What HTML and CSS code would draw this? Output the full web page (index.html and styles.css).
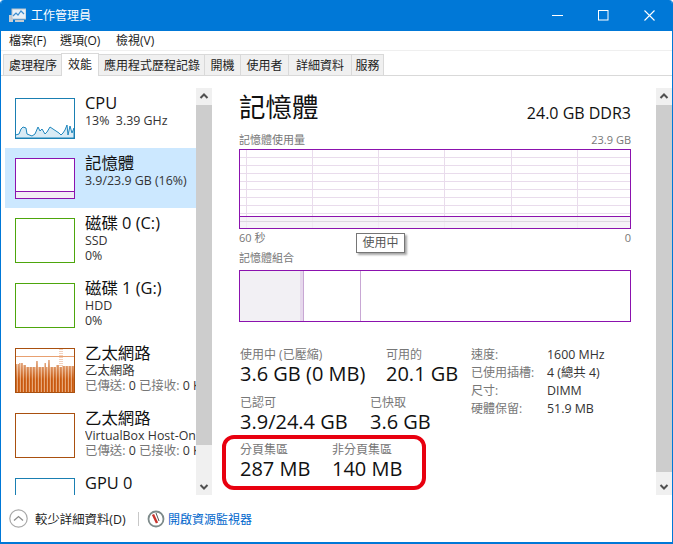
FILE: index.html
```html
<!DOCTYPE html>
<html lang="zh-Hant">
<head>
<meta charset="utf-8">
<title>工作管理員</title>
<link rel="stylesheet" href="styles.css">
</head>
<body>
<div class="window">
  <header class="titlebar">
    <svg class="app-icon" width="17" height="16" viewBox="0 0 17 16">
      <rect x="0" y="7" width="4" height="7" fill="#c9ced3"/>
      <rect x="3" y="1" width="14" height="10" fill="#e8f1f8" stroke="#b9c4cc"/>
      <polyline points="4,8 7,5 9,7 12,3 15,6" fill="none" stroke="#3f8fd0" stroke-width="1.2"/>
      <rect x="6" y="12" width="9" height="2" fill="#c4ccd2"/>
    </svg>
    <span class="title">工作管理員</span>
    <div class="controls">
      <svg width="11" height="11" viewBox="0 0 11 11"><path d="M0 5.5H11" stroke="#fff"/></svg>
      <svg width="11" height="11" viewBox="0 0 11 11"><rect x=".5" y=".5" width="9.5" height="9.5" fill="none" stroke="#fff"/></svg>
      <svg width="11" height="11" viewBox="0 0 11 11"><path d="M.5 .5L10.5 10.5M10.5 .5L.5 10.5" stroke="#fff" stroke-width="1.1"/></svg>
    </div>
  </header>

  <nav class="menu"><span>檔案(F)</span><span>選項(O)</span><span>檢視(V)</span></nav>

  <div class="tabs">
    <span class="tab t1">處理程序</span>
    <span class="tab active t2">效能</span>
    <span class="tab t3">應用程式歷程記錄</span>
    <span class="tab t4">開機</span>
    <span class="tab t5">使用者</span>
    <span class="tab t6">詳細資料</span>
    <span class="tab t7">服務</span>
  </div>

  <main class="main">
    <aside class="sidebar">
      <div class="list">
        <div class="item h60">
          <svg class="graph" width="60" height="41" viewBox="0 0 60 41">
            <path d="M.5 40V37L4 36L6 31L8 29L11 30L12 36L17 38L20 36L23 29L25 33L27 31L30 36L32 34L35 29L38 31L41 33L44 35L46 37L48 35L50 32L52 27L53 37L55 28L57 35L59 30V40Z" fill="#d9ebf5" stroke="#1f86bd"/>
            <rect x=".5" y=".5" width="59" height="40" fill="none" stroke="#1a7fb2"/>
          </svg>
          <div class="info"><div class="name">CPU</div><div class="sub">13%&nbsp; 3.39 GHz</div></div>
        </div>
        <div class="item h60 selected">
          <svg class="graph" width="60" height="41" viewBox="0 0 60 41">
            <rect x=".5" y=".5" width="59" height="40" fill="#fff"/>
            <rect x=".5" y="33.5" width="59" height="7" fill="#f2ecf4" stroke="#8b12ae"/>
            <rect x=".5" y=".5" width="59" height="40" fill="none" stroke="#8b12ae"/>
          </svg>
          <div class="info"><div class="name">記憶體</div><div class="sub">3.9/23.9 GB (16%)</div></div>
        </div>
        <div class="item h65">
          <span class="graph box green"></span>
          <div class="info"><div class="name">磁碟 0 (C:)</div><div class="sub">SSD</div><div class="sub">0%</div></div>
        </div>
        <div class="item h65">
          <span class="graph box green"></span>
          <div class="info"><div class="name">磁碟 1 (G:)</div><div class="sub">HDD</div><div class="sub">0%</div></div>
        </div>
        <div class="item h65">
          <svg class="graph" width="60" height="45" viewBox="0 0 60 45">
            <defs>
              <pattern id="stripes" width="3" height="45" patternUnits="userSpaceOnUse">
                <rect width="3" height="45" fill="#e8a878"/>
                <rect width="1.8" height="45" fill="#c9590f"/>
              </pattern>
              <linearGradient id="fade" x1="0" y1="0" x2="0" y2="1">
                <stop offset="0" stop-color="#fff" stop-opacity=".55"/>
                <stop offset=".6" stop-color="#fff" stop-opacity="0"/>
              </linearGradient>
            </defs>
            <rect width="60" height="45" fill="#fff"/>
            <path d="M1 44V16H4V15H8V17H11V19H21V13H23V19H29V15H31V19H33V12H35V19H41V17H44V19H47V18H60V44Z" fill="url(#stripes)"/>
            <path d="M1 44V16H4V15H8V17H11V19H21V13H23V19H29V15H31V19H33V12H35V19H41V17H44V19H47V18H60V44Z" fill="url(#fade)"/>
            <path d="M45 1V19M47 1V19" stroke="#e5a27a" stroke-dasharray="1 1"/>
            <path d="M1 8.5H59" stroke="#e8a070"/>
            <rect x=".5" y=".5" width="59" height="44" fill="none" stroke="#a9500f"/>
          </svg>
          <div class="info"><div class="name">乙太網路</div><div class="sub">乙太網路</div><div class="sub net">已傳送: <b>0</b> 已接收: <b>0 Kbps</b></div></div>
        </div>
        <div class="item h65">
          <span class="graph box brown"></span>
          <div class="info"><div class="name">乙太網路</div><div class="sub">VirtualBox Host-Only</div><div class="sub net">已傳送: <b>0</b> 已接收: <b>0 Kbps</b></div></div>
        </div>
        <div class="item last">
          <span class="graph box blue"></span>
          <div class="info"><div class="name">GPU 0</div></div>
        </div>
      </div>
      <div class="scrollbar narrow">
        <svg class="arrow" width="16" height="17" viewBox="0 0 16 17"><path d="M4.5 10L8 6.5L11.5 10" fill="none" stroke="#505050" stroke-width="2"/></svg>
        <div class="thumb side-thumb"></div>
        <div class="track"></div>
        <svg class="arrow" width="16" height="17" viewBox="0 0 16 17"><path d="M4.5 7L8 10.5L11.5 7" fill="none" stroke="#505050" stroke-width="2"/></svg>
      </div>
    </aside>

    <section class="detail">
      <div class="head"><h1>記憶體</h1><div class="spec">24.0 GB DDR3</div></div>
      <div class="caption first"><span>記憶體使用量</span><span>23.9 GB</span></div>
      <svg class="chart" width="392" height="80" viewBox="0 0 392 80">
        <g stroke="#e9dcec">
          <path d="M0 8.5H392M0 16.5H392M0 24.5H392M0 32.5H392M0 40.5H392M0 48.5H392M0 56.5H392M0 64.5H392M0 72.5H392"/>
          <path d="M7.5 0V80M73.5 0V80M139.5 0V80M205.5 0V80M272.5 0V80M338.5 0V80"/>
        </g>
        <rect x=".5" y="67.5" width="391" height="12" fill="#f2eef4" fill-opacity=".75" stroke="#8b12ae"/>
        <path d="M0 72.5H392" stroke="#dcd6df"/>
        <rect x=".5" y=".5" width="391" height="79" fill="none" stroke="#8b12ae"/>
      </svg>
      <div class="caption axis"><span>60 秒</span><span>0</span></div>
      <div class="caption second"><span>記憶體組合</span></div>
      <svg class="chart" width="392" height="52" viewBox="0 0 392 52">
        <rect x="1" y="1" width="60" height="50" fill="#f2f0f4"/>
        <rect x="61" y="1" width="4" height="50" fill="#e6d8ec"/>
        <path d="M64.5 1V51" stroke="#c8a7d4"/>
        <path d="M121.5 1V51" stroke="#c8a7d4"/>
        <rect x=".5" y=".5" width="391" height="51" fill="none" stroke="#8b12ae"/>
      </svg>

      <div class="bottom">
        <div class="stats">
          <div class="row">
            <div class="stat w146"><label>使用中 (已壓縮)</label><strong>3.6 GB (0 MB)</strong></div>
            <div class="stat"><label>可用的</label><strong>20.1 GB</strong></div>
          </div>
          <div class="row">
            <div class="stat w130"><label>已認可</label><strong>3.9/24.4 GB</strong></div>
            <div class="stat"><label>已快取</label><strong>3.6 GB</strong></div>
          </div>
          <div class="row">
            <div class="stat w92"><label>分頁集區</label><strong>287 MB</strong></div>
            <div class="stat"><label>非分頁集區</label><strong>140 MB</strong></div>
          </div>
        </div>
        <dl class="props">
          <dt>速度:</dt><dd>1600 MHz</dd>
          <dt>已使用插槽:</dt><dd>4 (總共 4)</dd>
          <dt>尺寸:</dt><dd>DIMM</dd>
          <dt>硬體保留:</dt><dd>51.9 MB</dd>
        </dl>
      </div>
    </section>

    <div class="scrollbar wide">
      <svg class="arrow" width="16" height="17" viewBox="0 0 16 17"><path d="M4.5 10L8 6.5L11.5 10" fill="none" stroke="#505050" stroke-width="2"/></svg>
      <div class="thumb main-thumb"></div>
      <div class="track"></div>
      <svg class="arrow" width="16" height="17" viewBox="0 0 16 17"><path d="M4.5 7L8 10.5L11.5 7" fill="none" stroke="#505050" stroke-width="2"/></svg>
    </div>

    <div class="tooltip">使用中</div>
    <div class="highlight"></div>
  </main>

  <footer class="footer">
    <svg width="19" height="19" viewBox="0 0 19 19"><circle cx="9.5" cy="9.5" r="8.7" fill="#fff" stroke="#a8a8a8" stroke-width="1.2"/><path d="M5 11.5L9.5 7.5L14 11.5" fill="none" stroke="#8c8c8c" stroke-width="1.3"/></svg>
    <span class="less">較少詳細資料(D)</span>
    <span class="divider"></span>
    <svg width="18" height="18" viewBox="0 0 18 18"><circle cx="9" cy="9" r="7.5" fill="#fff" stroke="#7d8a8a" stroke-width="1.8"/><path d="M6 4.5L10 13" stroke="#c8332c" stroke-width="2.4"/><path d="M9 3L12 11" stroke="#555" stroke-width="1"/></svg>
    <a class="link">開啟資源監視器</a>
  </footer>
</div>
</body>
</html>
```
FILE: styles.css
```css
* { box-sizing: border-box; }
html, body { margin: 0; padding: 0; background: #fff; overflow: hidden; }
body { font-family: "Open Sans", "Noto Sans CJK TC", sans-serif; color: #000; }
.window { width: 673px; height: 544px; display: flex; flex-direction: column; border: 1px solid #0078d7; border-top: 0; border-bottom-width: 2px; border-radius: 4px 4px 0 0; overflow: hidden; }

.titlebar { height: 31px; flex: none; background: #0078d7; color: #fff; display: flex; align-items: center; margin: 0 -1px; padding-left: 9px; }
.app-icon { margin-right: 5px; }
.title { font-size: 12px; line-height: 16px; }
.controls { margin-left: auto; display: flex; gap: 35px; padding-right: 18px; }

.menu { height: 20px; flex: none; display: flex; font-size: 12px; line-height: 20px; padding-left: 8px; border-bottom: 1px solid #efefef; color: #1a1a1a; }
.menu span:nth-child(1) { width: 51px; }
.menu span:nth-child(2) { width: 56px; }

.tabs { height: 25px; flex: none; display: flex; align-items: flex-end; padding-left: 2px; border-bottom: 1px solid #d9d9d9; font-size: 12px; color: #222; }
.tab { height: 21px; line-height: 22px; text-align: center; background: #f0f0f0; border: 1px solid #d9d9d9; border-bottom: 0; border-left: 0; flex: none; white-space: nowrap; }
.t1 { width: 59px; padding-left: 1px; border-left: 1px solid #d9d9d9; }
.t2 { width: 38px; }
.t3 { width: 106px; padding-left: 1px; }
.t4 { width: 36px; }
.t5 { width: 48px; }
.t6 { width: 63px; }
.t7 { width: 32px; }
.tab.active { height: 23px; background: #fff; line-height: 21px; margin-bottom: -1px; border-left: 1px solid #d9d9d9; margin-left: -1px; }

.main { position: relative; flex: 1; min-height: 0; height: 419px; display: flex; padding-top: 12px; }
.sidebar { width: 211px; flex: none; display: flex; padding-left: 4px; border-right: 1px solid #eeeeee; }
.list { width: 191px; height: 407px; overflow: hidden; flex: none; }
.item { display: flex; padding-left: 10px; padding-top: 10px; overflow: hidden; }
.h60 { height: 60px; }
.h65 { height: 65px; }
.last { height: 27px; }
.selected { background: #cce8ff; }
.graph { flex: none; display: block; margin-right: 10px; }
.box { width: 60px; height: 45px; border: 1px solid; }
.green { border-color: #4da60c; }
.brown { border-color: #a9500f; }
.blue { border-color: #1a7fb2; height: 60px; }
.info { white-space: nowrap; overflow: hidden; flex: 1; margin-top: -6px; }
.name { font-size: 16.4px; line-height: 21px; color: #111; }
.sub { font-size: 12.4px; line-height: 15px; color: #333; }
.net { color: #777; }
.net b { font-weight: 400; color: #333; }

.scrollbar { width: 16px; flex: none; height: 407px; display: flex; flex-direction: column; background: #f0f0f0; }
.narrow { margin-left: 0; }
.arrow { flex: none; display: block; }
.thumb { background: #cdcdcd; flex: none; }
.side-thumb { height: 340px; }
.main-thumb { height: 367px; }
.track { flex: 1; }

.detail { flex: 1; padding: 0 25px 0 27px; min-width: 0; }
.head { display: flex; justify-content: space-between; align-items: flex-end; height: 40px; margin-top: -1px; }
h1 { font-size: 26.5px; line-height: 40px; font-weight: 400; margin: 0; color: #111; }
.spec { font-size: 16px; line-height: 22px; margin-bottom: 3px; color: #111; }
.caption { display: flex; justify-content: space-between; font-size: 11px; line-height: 15px; color: #777; }
.first { margin-top: 5px; margin-bottom: 3px; height: 14px; }
.chart { display: block; }
.axis { margin-top: 1px; }
.second { margin-top: 5px; margin-bottom: 6px; height: 14px; }

.bottom { display: flex; margin-top: 25px; }
.stats { width: 232px; flex: none; padding-left: 1px; }
.row { display: flex; height: 47.5px; }
.stat { flex: none; }
.w146 { width: 146px; }
.w130 { width: 130px; }
.w92 { width: 92px; }
.stat label { display: block; font-size: 12px; line-height: 15px; color: #777; }
.stat strong { display: block; font-weight: 400; font-size: 20px; line-height: 24px; color: #111; white-space: nowrap; }

.props { margin: 0; display: grid; grid-template-columns: 76px auto; grid-auto-rows: 18px; font-size: 12px; line-height: 15px; padding-top: 0; }
.props dt { color: #777; }
.props dd { margin: 0; color: #333; font-size: 12.4px; }

.tooltip { position: absolute; left: 355px; top: 157px; width: 49px; height: 20px; background: #fff; border: 1px solid #767676; font-size: 12px; line-height: 18px; text-align: center; color: #555; box-shadow: 2px 2px 2px rgba(0,0,0,.35); }
.highlight { position: absolute; left: 221px; top: 359px; width: 204px; height: 55px; border: 4px solid #e8000f; border-radius: 12px; }

.footer { height: 47px; flex: none; display: flex; align-items: center; padding: 0 0 0 8px; font-size: 12px; }
.less { margin-left: 7px; width: 103px; color: #222; font-size: 12.4px; white-space: nowrap; }
.divider { width: 1px; height: 14px; background: #c8c8c8; margin-right: 8px; }
.link { margin-left: 3px; color: #0066cc; }
```
